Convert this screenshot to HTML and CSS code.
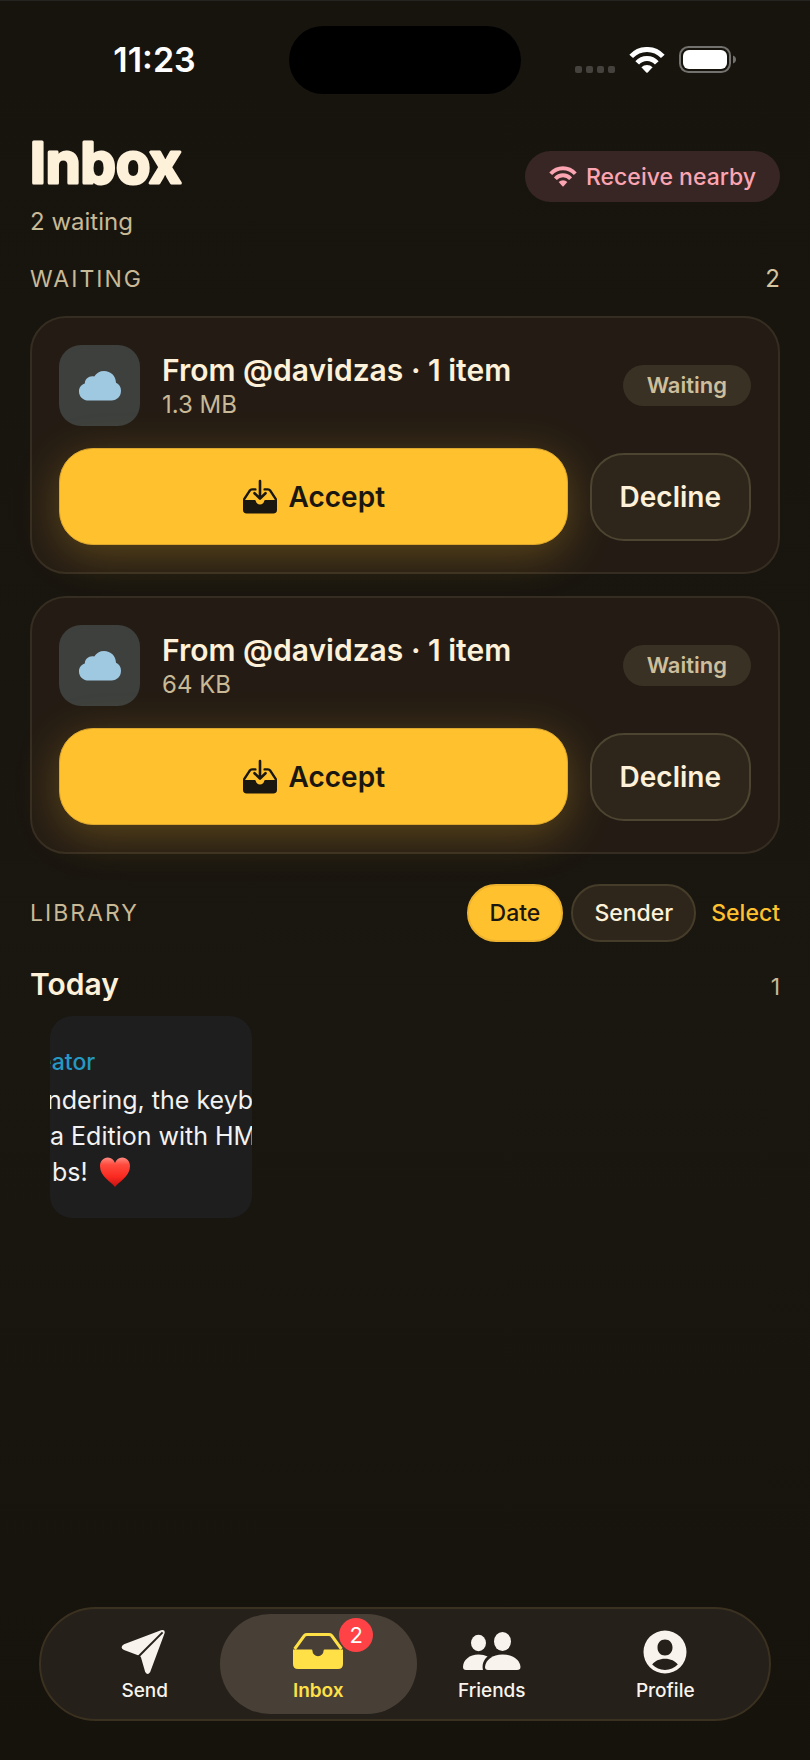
FILE: index.html
```html
<!DOCTYPE html>
<html lang="en">
<head>
    <meta charset="UTF-8">
    <meta name="viewport" content="width=device-width, initial-scale=1.0">
    <title>Inbox</title>
    <link rel="stylesheet" href="styles.css">
</head>
<body>
    <!-- shared icons -->
    <svg class="icon-defs" aria-hidden="true">
        <symbol id="icon-wifi" viewBox="0 0 36 26">
            <path d="M2.200 9.400A21.500 21.500 0 0 1 33.800 9.400" fill="none" stroke="currentColor" stroke-width="5"/>
            <path d="M8.200 15.800A13.200 13.200 0 0 1 27.800 15.800" fill="none" stroke="currentColor" stroke-width="5"/>
            <path d="M12.4 20.2A8 8 0 0 1 23.6 20.2L18.7 25.4Q18 26 17.3 25.4Z" fill="currentColor"/>
        </symbol>
        <symbol id="icon-cloud" viewBox="0 0 42 30">
            <path d="M10 29.5C4 29.5 0 25.6 0 20.4C0 16.6 2.2 13.6 5.8 12.4C6 7.6 10.6 4.4 15.2 5.6C17.4 2 20.8 0 25 0C31.8 0 36.8 5 37 11.8C40 13.2 42 16 42 19.8C42 25.4 38 29.5 32.4 29.5Z" fill="currentColor"/>
        </symbol>
        <symbol id="icon-download" viewBox="0 0 36 36">
            <path d="M13.4 10.4H10.2Q8.6 10.4 7.6 11.8L2.2 20.2M22.6 10.4H25.8Q27.4 10.4 28.4 11.8L33.8 20.2" fill="none" stroke="currentColor" stroke-width="2.4" stroke-linecap="round"/>
            <path d="M1 21H12.600Q13.600 21 13.800 22A4.300 4.300 0 0 0 22.200 22Q22.400 21 23.400 21H35V30.8Q35 34.6 31.2 34.6H4.8Q1 34.6 1 30.8Z" fill="currentColor"/>
            <path d="M18 2V19M12.5 14.2L18 19.6L23.5 14.2" fill="none" stroke="currentColor" stroke-width="2.6" stroke-linecap="round" stroke-linejoin="round"/>
        </symbol>
    </svg>

    <div class="status-bar">
        <span class="status-time">11:23</span>
        <div class="island"></div>
        <div class="status-icons">
            <div class="signal"><i></i><i></i><i></i><i></i></div>
            <svg class="status-wifi"><use href="#icon-wifi"/></svg>
            <svg class="battery" viewBox="0 0 58 28">
                <rect x="1" y="1" width="50" height="25" rx="8.5" fill="none" stroke="#74726e" stroke-width="2"/>
                <rect x="4" y="4" width="44" height="19" rx="6" fill="#fff"/>
                <path d="M54 9.5Q57 10.7 57 13.5T54 17.5Z" fill="#74726e"/>
            </svg>
        </div>
    </div>

    <main class="content">
        <header class="page-header">
            <div>
                <h1 class="page-title">
                    <svg class="page-title-text" role="img" aria-label="Inbox"><text x="0" y="44">Inbox</text></svg>
                </h1>
                <p class="page-subtitle">2 waiting</p>
            </div>
            <button type="button" class="nearby">
                <svg class="nearby-icon"><use href="#icon-wifi"/></svg>
                Receive nearby
            </button>
        </header>

        <section class="waiting">
            <div class="section-head">
                <h2 class="section-title">WAITING</h2>
                <span class="section-count">2</span>
            </div>
            <article class="card">
                <div class="card-info">
                    <div class="card-icon"><svg><use href="#icon-cloud"/></svg></div>
                    <div class="card-text">
                        <h3 class="card-title">From @davidzas · 1 item</h3>
                        <p class="card-size">1.3 MB</p>
                    </div>
                    <span class="tag">Waiting</span>
                </div>
                <div class="card-actions">
                    <button type="button" class="btn-accept"><svg><use href="#icon-download"/></svg>Accept</button>
                    <button type="button" class="btn-decline">Decline</button>
                </div>
            </article>
            <article class="card">
                <div class="card-info">
                    <div class="card-icon"><svg><use href="#icon-cloud"/></svg></div>
                    <div class="card-text">
                        <h3 class="card-title">From @davidzas · 1 item</h3>
                        <p class="card-size">64 KB</p>
                    </div>
                    <span class="tag">Waiting</span>
                </div>
                <div class="card-actions">
                    <button type="button" class="btn-accept"><svg><use href="#icon-download"/></svg>Accept</button>
                    <button type="button" class="btn-decline">Decline</button>
                </div>
            </article>
        </section>

        <section class="library">
            <div class="library-head">
                <h2 class="section-title">LIBRARY</h2>
                <div class="filters">
                    <button type="button" class="chip chip-active">Date</button>
                    <button type="button" class="chip">Sender</button>
                    <button type="button" class="select-link">Select</button>
                </div>
            </div>
            <div class="day-head">
                <h3 class="day-title">Today</h3>
                <span class="day-count">1</span>
            </div>
            <div class="thumb">
                <p class="thumb-author">eator</p>
                <p class="thumb-line thumb-line-first">ndering, the keyb</p>
                <p class="thumb-line">a Edition with HM</p>
                <p class="thumb-line thumb-line-last">bs!
                    <svg class="heart" viewBox="0 0 32 30" role="img" aria-label="heart">
                        <defs>
                            <linearGradient id="heart-fill" x1="0" y1="0" x2="0" y2="1">
                                <stop offset="0" stop-color="#ff8a80"/>
                                <stop offset=".25" stop-color="#ff4a3d"/>
                                <stop offset=".65" stop-color="#fb2a20"/>
                                <stop offset="1" stop-color="#c41212"/>
                            </linearGradient>
                        </defs>
                        <path d="M16 30C13 25.5 1 19.5 1 9.2C1 4 4.4 .5 8.8 .5C12.2 .5 14.8 2.6 16 6C17.2 2.6 19.8 .5 23.2 .5C27.6 .5 31 4 31 9.2C31 19.5 19 25.5 16 30Z" fill="url(#heart-fill)"/>
                    </svg>
                </p>
            </div>
        </section>
    </main>

    <nav class="tab-bar">
        <a href="#" class="tab">
            <svg class="tab-icon" viewBox="0 0 50 44">
                <path d="M41 .3Q46 -.8 44.300 4L30.200 42Q27.600 46 25.200 42L21 27.400Q20.600 25.800 18 25.200L4 20Q-.8 17.200 4 14.300Z"/>
                <path class="tab-slit" d="M42.600 2.400L17.500 27.500"/>
            </svg>
            <span>Send</span>
        </a>
        <a href="#" class="tab tab-active">
            <svg class="tab-icon" viewBox="0 0 50 44">
                <path d="M1.600 19L11.400 5.500Q12.400 4.500 14 4.500H36Q37.600 4.500 38.600 5.500L48.400 19" fill="none" stroke="currentColor" stroke-width="3"/>
                <path d="M0 19.500H18.400Q19.400 19.500 19.400 20.600A5.600 5.600 0 0 0 30.600 20.600Q30.600 19.500 31.600 19.500H50V34Q50 39 45 39H5Q0 39 0 34Z"/>
            </svg>
            <span>Inbox</span>
            <span class="badge">2</span>
        </a>
        <a href="#" class="tab">
            <svg class="tab-icon tab-icon-wide" viewBox="0 0 58 44">
                <ellipse cx="15.500" cy="13" rx="7.500" ry="8.200"/>
                <ellipse cx="39.500" cy="11.500" rx="8.500" ry="9.500"/>
                <path d="M3 40Q0 40 0 37C0 30 6.500 24.500 15.500 24.500C19 24.500 22 25.200 24.600 26.600C20.500 30 18.800 35 20 40Z"/>
                <path d="M25 40Q22 40 22 37C22.500 30 29.500 24.500 39.500 24.500C50 24.500 57 30 57.500 37Q57.500 40 54 40Z"/>
            </svg>
            <span>Friends</span>
        </a>
        <a href="#" class="tab">
            <svg class="tab-icon" viewBox="0 0 50 44">
                <path fill-rule="evenodd" d="M25 .5A21.500 21.500 0 1 0 25 43.500A21.500 21.500 0 1 0 25 .5ZM25 9.500C29.500 9.500 32.500 13 32.500 17.500S29.500 25.500 25 25.500S17.500 22 17.500 17.500S20.500 9.500 25 9.500ZM12.200 34.600C14.600 31 19.400 28.800 25 28.800S35.400 31 37.800 34.600C34.400 38.200 30 40 25 40S15.600 38.200 12.200 34.600Z"/>
            </svg>
            <span>Profile</span>
        </a>
    </nav>
</body>
</html>
```
FILE: styles.css
```css
*{
    box-sizing: border-box;
}
body{
    margin: 0;
    min-height: 100vh;
    display: flex;
    flex-direction: column;
    border-top: 1px solid #262420;
    background: linear-gradient(#17140e, #1a1610 60%, #16120c);
    font-family: Inter, "Liberation Sans", sans-serif;
    font-size: 24px;
    line-height: 30px;
    color: #fdf1da;
}
h1, h2, h3, p{
    margin: 0;
}
button{
    font: inherit;
    color: inherit;
    padding: 0;
    border: none;
    background: none;
    cursor: pointer;
}
.icon-defs{
    display: none;
}

/* status bar */
.status-bar{
    display: grid;
    grid-template-columns: 1fr 232px 1fr;
    align-items: center;
    height: 118px;
    color: #fff;
}
.status-time{
    padding-left: 20px;
    text-align: center;
    font-size: 34px;
    font-weight: 600;
}
.island{
    height: 68px;
    border-radius: 34px;
    background: #000;
}
.status-icons{
    display: flex;
    align-items: center;
    justify-content: center;
    gap: 14px;
    padding-right: 20px;
}
.signal{
    display: flex;
    gap: 4px;
    padding-top: 18px;
}
.signal i{
    width: 7px;
    height: 7px;
    border-radius: 2px;
    background: #45423d;
}
.status-wifi{
    width: 36px;
    height: 26px;
}
.battery{
    width: 58px;
    height: 28px;
}

.content{
    padding: 16px 30px 40px;
}
.page-header{
    display: flex;
    justify-content: space-between;
}
.page-title{
    height: 72px;
}
.page-title-text{
    display: block;
    width: 170px;
    height: 72px;
    padding-top: 4px;
    overflow: visible;
    font-size: 56px;
    font-weight: 700;
    fill: #fdf1da;
    stroke: #fdf1da;
    stroke-width: 3px;
    stroke-linejoin: round;
}
.page-subtitle{
    color: #c8b997;
}
.nearby{
    display: flex;
    align-items: center;
    gap: 9px;
    height: 51px;
    margin-top: 16px;
    padding: 0 24px;
    border-radius: 26px;
    background: #372624;
    color: #fba5b3;
    font-size: 23px;
    font-weight: 500;
}
.nearby-icon{
    width: 28px;
    height: 21px;
}

/* waiting list */
.waiting{
    display: flex;
    flex-direction: column;
    gap: 22px;
    margin-top: 27px;
}
.section-head, .library-head, .day-head{
    display: flex;
    align-items: center;
    justify-content: space-between;
}
.section-title{
    font-size: 23px;
    font-weight: 400;
    letter-spacing: 2px;
    color: #c8b997;
}
.section-count{
    color: #d4c49f;
}
.card{
    padding: 27px;
    border: 2px solid #362d22;
    border-radius: 36px;
    background: #241c14;
}
.card-info{
    display: flex;
    align-items: center;
    gap: 22px;
}
.card-icon{
    display: flex;
    align-items: center;
    justify-content: center;
    width: 81px;
    height: 81px;
    border-radius: 22px;
    background: #3d403d;
    color: #9fc8e1;
}
.card-icon svg{
    width: 42px;
    height: 30px;
}
.card-text{
    flex: 1;
    padding-bottom: 2px;
}
.card-title{
    font-size: 30px;
    line-height: 40px;
    font-weight: 600;
}
.card-size{
    color: #c8b997;
}
.tag{
    padding: 0 24px;
    border-radius: 21px;
    background: #3a3125;
    color: #cdbf9c;
    font-size: 22px;
    line-height: 41px;
    font-weight: 600;
}
.card-actions{
    display: flex;
    align-items: center;
    gap: 22px;
    margin-top: 22px;
}
.btn-accept, .btn-decline{
    border-radius: 34px;
    font-size: 28px;
    font-weight: 600;
}
.btn-accept{
    display: flex;
    align-items: center;
    justify-content: center;
    gap: 11px;
    flex: 1;
    height: 97px;
    border: 1px solid #dda62c;
    background: #ffc12e;
    color: #1a1610;
    box-shadow: 0 10px 44px rgba(255, 193, 46, .26);
}
.btn-accept svg{
    width: 36px;
    height: 36px;
}
.btn-decline{
    height: 88px;
    padding: 0 28px;
    border: 2px solid #4d4431;
    background: #2e261b;
}

/* library */
.library{
    margin-top: 30px;
}
.filters{
    display: flex;
    align-items: center;
    gap: 8px;
    font-size: 23px;
    font-weight: 500;
}
.chip{
    height: 58px;
    padding: 0 21px;
    border: 2px solid #463c2a;
    border-radius: 29px;
    background: #2e261b;
}
.chip-active{
    border-color: #eeb32e;
    background: #ffc12e;
    color: #1a1610;
}
.select-link{
    margin-left: 7px;
    color: #ffc12e;
}
.day-head{
    align-items: baseline;
    margin-top: 22px;
}
.day-title{
    font-size: 30px;
    line-height: 40px;
    font-weight: 600;
}
.day-count{
    font-size: 23px;
    color: #c8b997;
}
.thumb{
    width: 202px;
    height: 202px;
    margin: 12px 0 0 20px;
    padding-top: 28px;
    border-radius: 22px;
    overflow: hidden;
    background: #1e1e1e;
    color: #f2f2f2;
    font-size: 25px;
    line-height: 36px;
    white-space: nowrap;
}
.thumb-author{
    margin: 0 0 2px -12px;
    color: #2499c4;
    font-size: 23px;
    font-weight: 500;
}
.thumb-line-first{
    margin-left: -3px;
}
.thumb-line-last{
    display: flex;
    align-items: center;
    gap: 11px;
    margin-left: 2px;
}
.heart{
    width: 32px;
    height: 30px;
}

/* bottom tabs */
.tab-bar{
    display: flex;
    height: 114px;
    margin: auto 39px 39px;
    padding: 0 17px;
    border: 2px solid #3b3120;
    border-radius: 57px;
    background: #25201a;
}
.tab{
    position: relative;
    isolation: isolate;
    flex: 1;
    display: flex;
    flex-direction: column;
    align-items: center;
    padding-top: 21px;
    color: #f8f3ec;
    font-size: 19px;
    line-height: 24px;
    font-weight: 500;
    text-decoration: none;
}
.tab-icon{
    width: 50px;
    height: 44px;
    margin-bottom: 5px;
    fill: currentColor;
}
.tab-icon-wide{
    width: 58px;
}
.tab-slit{
    stroke: #25201a;
    stroke-width: 2;
}
.tab-active{
    color: #ffe046;
    font-weight: 600;
}
.tab-active::before{
    content: "";
    position: absolute;
    z-index: -1;
    inset: 5px -12px;
    border-radius: 50px;
    background: #484037;
}
.badge{
    position: absolute;
    top: 9px;
    left: calc(50% + 21px);
    width: 34px;
    height: 34px;
    border-radius: 50%;
    background: #ff4245;
    color: #fff;
    font-size: 22px;
    line-height: 34px;
    font-weight: 400;
    text-align: center;
}
```
